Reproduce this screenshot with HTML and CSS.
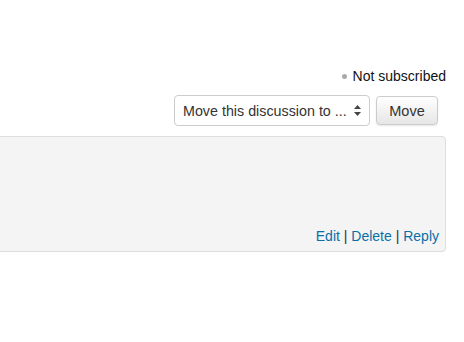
FILE: index.html
```html
<!DOCTYPE html>
<html lang="en">
<head>
    <meta charset="UTF-8">
    <title>Discussion</title>
    <link rel="stylesheet" href="styles.css">
</head>
<body>
    <div class="page">
        <div class="subscription">
            <span class="dot"></span>
            <span>Not subscribed</span>
        </div>

        <!-- Move discussion form -->
        <div class="move-form">
            <div class="select-box">
                <span>Move this discussion to ...</span>
                <svg class="arrows" width="7" height="11" viewBox="0 0 7 11">
                    <path d="M3.5 0 L7 4 L0 4 Z" fill="#444"/>
                    <path d="M3.5 11 L7 7 L0 7 Z" fill="#444"/>
                </svg>
            </div>
            <button class="move-btn">Move</button>
        </div>

        <!-- Post -->
        <div class="post">
            <div class="commands">
                <a href="#">Edit</a> | <a href="#">Delete</a> | <a href="#">Reply</a>
            </div>
        </div>
    </div>
</body>
</html>
```

FILE: styles.css
```css
body {
    margin: 0;
    font-family: "Liberation Sans", Arial, sans-serif;
    font-size: 14px;
    color: #333;
    background-color: #fff;
}
.page {
    margin-left: -20px;
    padding: 67px 18px 0 0;
}
.subscription {
    display: flex;
    justify-content: flex-end;
    align-items: center;
    gap: 6px;
    color: #111;
    height: 18px;
}
.dot {
    width: 5px;
    height: 5px;
    border-radius: 50%;
    background-color: #aaa;
}
.move-form {
    display: flex;
    justify-content: flex-end;
    align-items: center;
    gap: 6px;
    margin-top: 10px;
    padding-right: 8px;
}
.select-box {
    display: flex;
    align-items: center;
    justify-content: space-between;
    box-sizing: border-box;
    width: 196px;
    height: 31px;
    padding: 0 8px 0 8px;
    border: 1px solid #ccc;
    border-radius: 4px;
    background-color: #fff;
    color: #333;
    font-size: 14.3px;
}
.move-btn {
    box-sizing: border-box;
    width: 62px;
    height: 29px;
    font-family: inherit;
    font-size: 14.5px;
    color: #333;
    border: 1px solid #ccc;
    border-radius: 4px;
    background: linear-gradient(#fff, #e6e6e6);
    box-shadow: 0 1px 2px rgba(0, 0, 0, 0.1);
}
.post {
    margin-top: 10px;
    height: 116px;
    box-sizing: border-box;
    display: flex;
    flex-direction: column;
    justify-content: flex-end;
    padding: 0 6px 7px 0;
    background-color: #f4f4f4;
    border: 1px solid #ddd;
    border-radius: 4px;
}
.commands {
    text-align: right;
    color: #333;
}
.commands a {
    color: #0a6fa8;
    text-decoration: none;
}
```
